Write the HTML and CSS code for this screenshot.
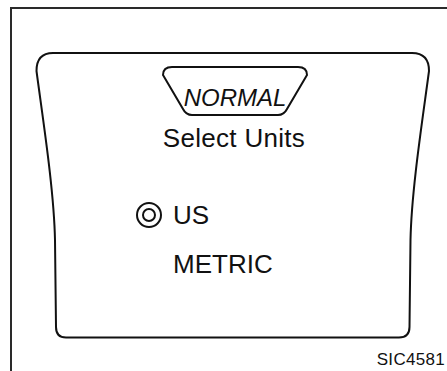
FILE: index.html
```html
<!DOCTYPE html>
<html lang="en">
<head>
  <meta charset="UTF-8" />
  <meta name="viewport" content="width=device-width, initial-scale=1.0" />
  <title>Select Units</title>
  <link rel="stylesheet" href="styles.css">
</head>
<body>
  <div class="frame">
    <div class="screen">
      <svg class="screen-outline" viewBox="35 52 396 287" width="396" height="287">
        <path d="M 53 53 H 412 Q 429 53 429 71 C 422.5 120 411.5 190 410.5 240 L 409.5 327 Q 409.5 337.5 399 337.5 H 66 Q 56 337.5 56 327 L 55 240 C 54 190 43 120 36.5 71 Q 36.5 53 53 53 Z" />
      </svg>
      <div class="badge">
        <svg class="badge-outline" viewBox="0 0 146 50" width="146" height="50">
          <path d="M 10 1 H 136 Q 145 1 145 9 L 125 43 Q 122 49 116 49 H 30 Q 24 49 21 43 L 1 9 Q 1 1 10 1 Z" />
        </svg>
        <span class="badge-text">NORMAL</span>
      </div>
      <div class="title">Select Units</div>
      <div class="options">
        <div class="option selected">
          <span class="radio"></span>
          <span class="label">US</span>
        </div>
        <div class="option">
          <span class="radio"></span>
          <span class="label">METRIC</span>
        </div>
      </div>
    </div>
    <div class="code">SIC4581</div>
  </div>
</body>
</html>
```

FILE: styles.css
```css
body { margin: 0; background: #fff; font-family: "Liberation Sans", Arial, sans-serif; color: #111; }
.frame { margin: 7px 0 0 10px; height: 364px; border-top: 2px solid #2a2a2a; border-left: 2px solid #2a2a2a; overflow: hidden; }
.screen { position: relative; margin: 43px 0 0 23px; padding-top: 14px; box-sizing: border-box; width: 396px; height: 287px; }
.screen-outline { position: absolute; left: 0; top: 0; }
.screen-outline path, .badge-outline path { fill: none; stroke: #111; stroke-width: 2; }
.badge { position: relative; margin: 0 auto; width: 146px; height: 50px; box-sizing: border-box; padding-top: 20px; text-align: center; transform: translateX(2px); }
.badge-outline { position: absolute; left: 0; top: 0; }
.badge-text { position: relative; font-size: 24px; line-height: 24px; font-style: italic; }
.title { margin-top: 9px; font-size: 26px; line-height: 26px; text-align: center; letter-spacing: 0.3px; transform: translateX(1px); }
.options { display: flex; flex-direction: column; gap: 23px; margin-top: 51px; padding-left: 101px; }
.option { display: flex; align-items: center; gap: 11px; font-size: 26px; line-height: 26px; }
.radio { width: 26px; height: 26px; box-sizing: border-box; border-radius: 50%; display: flex; align-items: center; justify-content: center; }
.option.selected .radio { border: 2px solid #111; }
.option.selected .radio::after { content: ""; width: 14px; height: 14px; box-sizing: border-box; border: 2px solid #111; border-radius: 50%; }
.code { margin-top: 12px; padding-right: 2px; text-align: right; font-size: 17px; line-height: 17px; letter-spacing: 0.3px; }
```
